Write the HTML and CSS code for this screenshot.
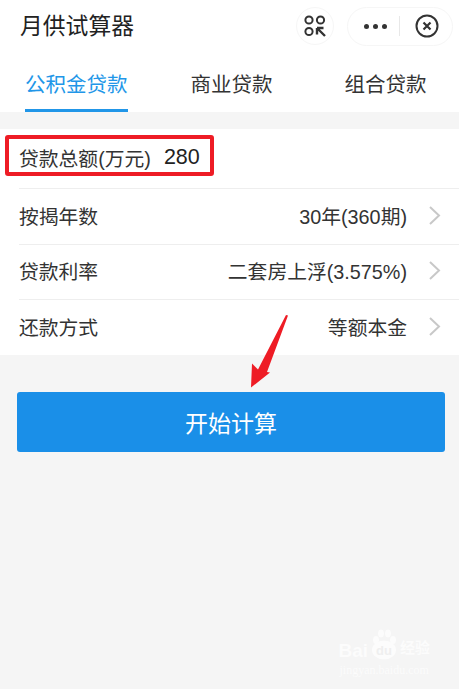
FILE: index.html
```html
<!DOCTYPE html>
<html lang="zh-CN">
<head>
  <meta charset="UTF-8" />
  <title>月供试算器</title>
  <link rel="stylesheet" href="styles.css">
</head>
<body>

  <!-- Title bar -->
  <div class="nav">
    <div class="nav-title">月供试算器</div>
    <div class="scan-btn">
      <svg width="22" height="22" viewBox="0 0 22 22" fill="none" stroke="#333" stroke-width="2">
        <circle cx="5" cy="5" r="3.6"/>
        <circle cx="16.5" cy="5" r="3.6"/>
        <circle cx="5" cy="16.5" r="3.6"/>
        <path d="M13 13h6.5M13 13v6.5M14 14l7 7" stroke-width="2.4"/>
      </svg>
    </div>
    <div class="capsule">
      <div class="dots"><span></span><span></span><span></span></div>
      <div class="capsule-line"></div>
      <svg width="24" height="24" viewBox="0 0 24 24" fill="none" stroke="#333">
        <circle cx="12" cy="12" r="10.5" stroke-width="2"/>
        <path d="M8.5 8.5l7 7M15.5 8.5l-7 7" stroke-width="2.2"/>
      </svg>
    </div>
  </div>

  <!-- Tabs -->
  <div class="tabs">
    <div class="tab active">公积金贷款</div>
    <div class="tab">商业贷款</div>
    <div class="tab last-tab">组合贷款</div>
  </div>

  <!-- Form -->
  <div class="form">
    <div class="row first-row">
      <span class="label">贷款总额(万元)</span>
      <span class="amount">280</span>
      <div class="highlight"></div>
    </div>
    <div class="row">
      <span class="label">按揭年数</span>
      <span class="value">30年(360期)</span>
      <svg class="chevron" width="12" height="19" viewBox="0 0 12 19" fill="none" stroke="#c8c8c8" stroke-width="2"><path d="M1 1l9 8.5-9 8.5"/></svg>
    </div>
    <div class="row">
      <span class="label">贷款利率</span>
      <span class="value">二套房上浮(3.575%)</span>
      <svg class="chevron" width="12" height="19" viewBox="0 0 12 19" fill="none" stroke="#c8c8c8" stroke-width="2"><path d="M1 1l9 8.5-9 8.5"/></svg>
    </div>
    <div class="row">
      <span class="label">还款方式</span>
      <span class="value">等额本金</span>
      <svg class="chevron" width="12" height="19" viewBox="0 0 12 19" fill="none" stroke="#c8c8c8" stroke-width="2"><path d="M1 1l9 8.5-9 8.5"/></svg>
    </div>
  </div>

  <div class="action">
    <button class="start-btn">开始计算</button>
    <!-- annotation arrow -->
    <svg class="arrow" width="40" height="74" viewBox="0 0 40 74"><path d="M38 .5L17 57l3 .5L1 72.5l1-24 6 6L36 0z" fill="#ee1c25"/></svg>
  </div>

  <!-- Watermark -->
  <div class="watermark">
    <div class="wm-top">
      <span class="wm-bai">Bai</span>
      <svg class="wm-paw" width="30" height="32" viewBox="0 0 30 32">
        <g fill="#fff">
          <ellipse cx="7" cy="11" rx="3" ry="4"/>
          <ellipse cx="12" cy="4.5" rx="3" ry="4"/>
          <ellipse cx="19" cy="4.5" rx="3" ry="4"/>
          <ellipse cx="24" cy="11" rx="3" ry="4"/>
          <ellipse cx="15" cy="21" rx="12" ry="9.5"/>
        </g>
        <text x="15" y="26" text-anchor="middle" font-size="13" font-weight="bold" fill="#ededed" font-family="Liberation Sans">du</text>
      </svg>
      <span class="wm-jy">经验</span>
    </div>
    <div class="wm-url">jingyan.baidu.com</div>
  </div>

</body>
</html>
```

FILE: styles.css
```css
* {
  margin: 0;
  padding: 0;
  box-sizing: border-box;
}

html, body {
  height: 100%;
  overflow: hidden;
}

body {
  position: relative;
  background-color: #f5f5f5;
  color: #333;
  font-family: "Liberation Sans", "Noto Sans CJK SC", sans-serif;
}

/* === TITLE BAR === */
.nav {
  height: 52px;
  background: #fff;
  display: flex;
  align-items: center;
  padding: 0 6px 0 20px;
}

.nav-title {
  font-size: 22.8px;
  color: #222;
  margin-right: auto;
  padding-bottom: 3px;
}

.scan-btn {
  width: 38px;
  height: 38px;
  border: 1px solid #f6f6f6;
  border-radius: 50%;
  display: flex;
  justify-content: center;
  align-items: center;
  margin-right: 13px;
}

.capsule {
  width: 106px;
  height: 39px;
  border: 1px solid #f6f6f6;
  border-radius: 20px;
  display: flex;
  align-items: center;
  padding-left: 16px;
}

.dots {
  display: flex;
  gap: 4px;
}

.dots span {
  width: 5px;
  height: 5px;
  border-radius: 50%;
  background: #333;
}

.capsule-line {
  width: 1px;
  height: 20px;
  background: #e8e8e8;
  margin: 0 15px 0 12px;
}

/* === TABS === */
.tabs {
  height: 60px;
  background: #fff;
  display: flex;
  gap: 63px;
  padding-left: 25px;
}

.tab {
  height: 60px;
  padding-top: 13px;
  font-size: 20.5px;
  line-height: 40px;
  color: #333;
  white-space: nowrap;
}

.last-tab {
  margin-left: 9px;
}

.tab.active {
  color: #2196e8;
  border-bottom: 3px solid #2196e8;
}

/* === FORM === */
.form {
  margin-top: 17px;
  background: #fff;
}

.row {
  position: relative;
  height: 55.5px;
  margin-left: 19px;
  padding-right: 18px;
  padding-bottom: 2px;
  display: flex;
  align-items: center;
  border-bottom: 1px solid #eee;
  font-size: 19.8px;
}

.row:last-child {
  height: 54.5px;
  border-bottom: none;
}

.first-row {
  height: 60px;
}

.label {
  color: #333;
}

.amount {
  margin-left: 13px;
  font-size: 21.5px;
  color: #222;
}

.value {
  margin-left: auto;
  color: #333;
}

.chevron {
  margin-left: 22px;
}

.highlight {
  position: absolute;
  left: -14px;
  top: 6px;
  width: 209px;
  height: 41px;
  border: 4px solid #ee1c25;
  border-radius: 3px;
}

/* === BUTTON === */
.action {
  position: relative;
  padding: 37.5px 14px 0 17px;
}

.start-btn {
  width: 100%;
  height: 60px;
  background: #1a8fe8;
  color: #fff;
  border: none;
  border-radius: 3px;
  font-family: inherit;
  font-size: 23px;
}

.arrow {
  position: absolute;
  left: 250px;
  top: -40px;
}

/* === WATERMARK === */
.watermark {
  position: absolute;
  right: 29px;
  bottom: 11px;
  color: #fff;
  opacity: 0.7;
}

.wm-top {
  display: flex;
  align-items: flex-end;
  gap: 1px;
  font-size: 19px;
  font-weight: bold;
  line-height: 20px;
}

.wm-jy {
  font-size: 15px;
  margin-bottom: 3px;
}

.wm-url {
  margin-top: 2px;
  font-family: "Liberation Serif", serif;
  font-size: 12px;
  text-align: center;
}
```
